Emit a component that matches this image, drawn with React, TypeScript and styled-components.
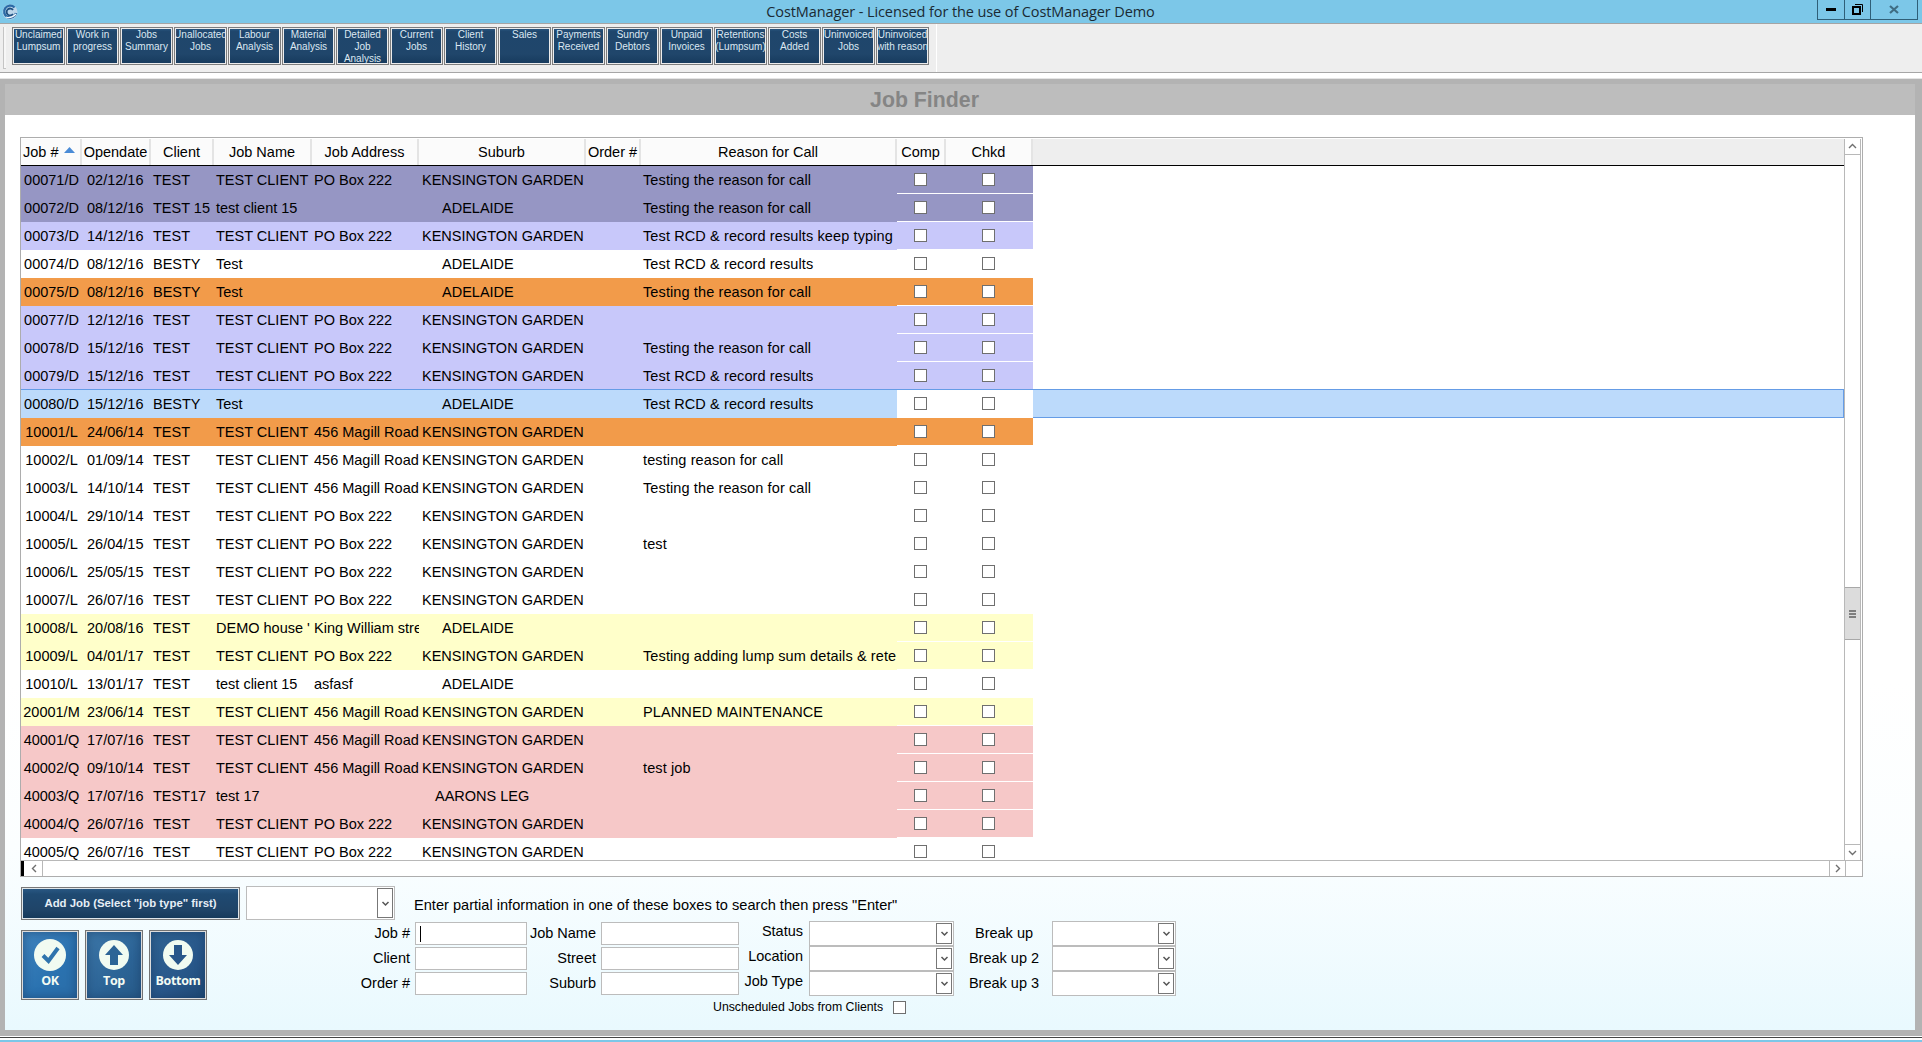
import React from "react";
import styled, { createGlobalStyle } from "styled-components";

const Global = createGlobalStyle`
  html, body { margin: 0; padding: 0; background: #fff; overflow: hidden; }
  * { box-sizing: border-box; }
  #root { width: 1922px; height: 1042px; overflow: hidden; }
`;

const SANS = `"Liberation Sans", Arial, sans-serif`;

const Window = styled.div`
  width: 1922px; height: 1042px; display: flex; flex-direction: column;
  font-family: ${SANS}; color: #000; overflow: hidden;
`;

/* title bar */
const TitleBar = styled.div`
  height: 24px; flex: none; background: #7cc7e8; border-bottom: 1px solid #a4a4a4;
  display: flex; align-items: flex-start; position: relative;
`;
const AppIcon = styled.svg`width: 16px; height: 16px; margin: 4px 0 0 2px; flex: none;`;
const TitleText = styled.div`
  flex: 1; text-align: center; font: 14.5px/23px "Open Sans", sans-serif; color: #1a2a33; padding-left: 86px; letter-spacing: -0.1px;
`;
const WinButtons = styled.div`display: flex; height: 20px; margin-right: 4px; flex: none;`;
const WinButton = styled.div<{ $w: number }>`
  width: ${p => p.$w}px; height: 20px; border: 1px solid #2f5f78; border-top: none; border-left-width: ${p => p.$w === 28 ? 1 : 0}px;
  display: flex; align-items: center; justify-content: center;
`;

/* toolbar */
const ToolbarRow = styled.div`
  height: 49px; flex: none; background: #eeeeee; border-bottom: 1px solid #a6a6a6; display: flex;
`;
const Grip = styled.div`
  width: 3px; height: 42px; margin: 3px 6px 0 3px; flex: none; background: #f6f6f6; border-left: 1px solid #c4c4c4; border-bottom: 1px solid #c4c4c4;
`;
const Tools = styled.div`
  display: flex; gap: 1px; padding-top: 3px; width: 925px; flex: none; border-right: 1px solid #fff;
`;
const NAVY = `linear-gradient(180deg, #2c5a85 0%, #1f466c 10%, #20466b 72%, #163a5c 100%)`;
const ToolButton = styled.div`
  width: 53px; height: 38px; flex: none; border: 1px solid #7d7d7d; box-shadow: inset 0 0 0 1px #ececec;
  background: ${NAVY}; color: #dce8f2; font: 10px/12px ${SANS}; text-align: center; padding-top: 1px; overflow: hidden; white-space: nowrap;
`;
const ToolLine = styled.div`display: block; margin: 0 -3px;`;

const WhiteGap = styled.div`height: 6px; flex: none; background: #fff; border-bottom: 1px solid #e4e4e4;`;

/* main panel */
const Panel = styled.div`
  height: 957px; flex: none; background: #b3b3b3; padding: 5px 7px 6px 5px; display: flex; flex-direction: column;
`;
const PanelHeader = styled.div`
  height: 31px; flex: none; background: #bdbdbd; color: #858585; font: bold 21.3px/33px ${SANS}; text-align: center; padding-right: 71px;
`;
const PanelBody = styled.div`
  flex: 1; min-height: 0; padding: 22px 0 0 15px; background: linear-gradient(180deg, #fff 0%, #fff 62%, #fbfeff 80%, #e9f9fe 100%);
`;

/* grid */
const GridFrame = styled.div`
  width: 1843px; height: 740px; border: 1px solid #adadad; padding-top: 1px; display: flex; flex-direction: column; background: #fff;
`;
const GridTop = styled.div`display: flex; height: 721px; flex: none;`;
const GridMain = styled.div`width: 1823px; flex: none; display: flex; flex-direction: column; overflow: hidden;`;
const HeaderRow = styled.div`
  height: 27px; flex: none; display: flex; background: #eeeeee; border-bottom: 1px solid #000;
`;
const HeaderCell = styled.div<{ $w: number; $left?: boolean }>`
  width: ${p => p.$w}px; flex: none; background: #fbfbfb; border-right: 2px solid #e4e4e4;
  font-size: 14.5px; line-height: 26px; white-space: nowrap; overflow: hidden;
  text-align: ${p => (p.$left ? "left" : "center")}; padding-left: ${p => (p.$left ? 2 : 0)}px;
  display: flex; align-items: center; justify-content: ${p => (p.$left ? "flex-start" : "center")};
`;
const SortArrow = styled.svg`width: 11px; height: 6px; margin: -5px 0 0 6px; flex: none;`;
const GridBody = styled.div`flex: 1; min-height: 0; overflow: hidden;`;

const ROW_COLORS: Record<string, string> = {
  p: "#9696c4", l: "#c8c8fa", w: "#ffffff", o: "#f29b4a", y: "#ffffca", k: "#f6c8c8", s: "#bcdafb",
};
const Row = styled.div<{ $selected: boolean }>`
  height: 28px; display: flex; position: relative; z-index: ${p => (p.$selected ? 1 : 0)};
  box-shadow: ${p => (p.$selected ? "0 -1px 0 #659ce6, inset 0 -1px 0 #659ce6, inset 1px 0 0 #659ce6, inset -1px 0 0 #659ce6" : "none")};
  width: ${p => (p.$selected ? "1823px" : "1012px")};
`;
const Cell = styled.div<{ $w: number; $bg: string; $center?: boolean; $indent?: number }>`
  width: ${p => p.$w}px; flex: none; background: ${p => ROW_COLORS[p.$bg]}; font-size: 14.5px; line-height: 28px;
  white-space: nowrap; overflow: hidden; text-align: ${p => (p.$center ? "center" : "left")};
  padding-left: ${p => (p.$center ? 0 : p.$indent ?? 2)}px;
`;
const OverflowCell = styled(Cell)`overflow: visible;`;
const ReasonCell = styled(Cell)`letter-spacing: 0.11px;`;
const CheckCell = styled.div<{ $w: number; $bg: string }>`
  width: ${p => p.$w}px; flex: none; background: ${p => (p.$bg === "s" ? "#fff" : ROW_COLORS[p.$bg])};
  border-bottom: 1px solid #fff; display: flex; align-items: center; justify-content: center; padding-right: 2px;
`;
const Check = styled.div`
  width: 13px; height: 13px; border: 1px solid #6f6f6f; background: #fff; flex: none;
`;
const RowFill = styled.div`flex: 1; background: #bcdafb; margin: 0 1px 1px 0;`;

/* scrollbars */
const VScroll = styled.div`
  width: 17px; flex: none; border-left: 1px solid #b8b8b8; border-right: 1px solid #b8b8b8; display: flex; flex-direction: column;
`;
const ScrollBtn = styled.div<{ $edge: "top" | "bottom" | "left" | "right" | "none" }>`
  flex: none; display: flex; align-items: center; justify-content: center; background: #fff;
  ${p => (p.$edge === "top" ? "height:16px;border-bottom:1px solid #b8b8b8;" : "")}
  ${p => (p.$edge === "bottom" ? "height:16px;border-top:1px solid #b8b8b8;" : "")}
  ${p => (p.$edge === "left" ? "width:16px;border-right:1px solid #b8b8b8;" : "")}
  ${p => (p.$edge === "right" ? "width:16px;border-left:1px solid #b8b8b8;" : "")}
  ${p => (p.$edge === "none" ? "width:17px;border-left:1px solid #b8b8b8;" : "")}
`;
const VSpacer = styled.div<{ $fixed?: number }>`
  ${p => (p.$fixed ? `height:${p.$fixed}px;flex:none;` : "flex:1;")}
`;
const Thumb = styled.div`
  height: 53px; flex: none; background: #dcdcdc; border-top: 1px solid #a8a8a8; border-bottom: 1px solid #a8a8a8;
  display: flex; flex-direction: column; align-items: center; justify-content: center; gap: 1px;
`;
const ThumbLine = styled.div`width: 7px; height: 2px; background: #7f7f7f;`;
const HScroll = styled.div`
  height: 16px; flex: none; border-top: 1px solid #b8b8b8; display: flex; padding-left: 0;
`;
const HMark = styled.div`width: 3px; height: 15px; background: #000; flex: none; margin-right: 3px;`;
const HTrack = styled.div`flex: 1;`;
const Chev = styled.svg`width: 9px; height: 9px; flex: none;`;

/* bottom */
const Bottom = styled.div`display: flex; flex-direction: column; padding-top: 9px; width: 1843px;`;
const TopLine = styled.div`display: flex; height: 34px; align-items: flex-start; padding-left: 1px;`;
const AddJob = styled.div`
  width: 219px; height: 33px; margin-top: 1px; flex: none; border: 1px solid #777; box-shadow: inset 0 0 0 1px #dfe6ea;
  background: linear-gradient(180deg, #2b5a86 0%, #1f4a72 20%, #1f4468 70%, #15395a 100%);
  color: #e6eef5; font: bold 11.4px/30px ${SANS}; text-align: center;
`;
const DropBox = styled.div<{ $w: number; $h: number }>`
  width: ${p => p.$w}px; height: ${p => p.$h}px; flex: none; border: 1px solid #bcbcbc; background: #fff;
  display: flex; justify-content: flex-end; padding: 1px;
`;
const AddDrop = styled(DropBox)`margin-left: 6px;`;
const DropArrow = styled.div`
  width: 16px; border: 1px solid #777; background: #fff; display: flex; align-items: center; justify-content: center; flex: none;
`;
const Hint = styled.div`margin: 9px 0 0 19px; font-size: 14.6px; line-height: 20px; white-space: nowrap;`;
const MainLine = styled.div`display: flex; margin-top: 1px;`;
const Actions = styled.div`width: 325px; flex: none; display: flex; gap: 6px; padding: 9px 0 0 1px; align-items: flex-start;`;
const BigButton = styled.div<{ $tone: "a" | "b" | "c" }>`
  width: 58px; height: 70px; flex: none; border: 1px solid #737373; box-shadow: inset 0 0 0 1px #dcdcdc, inset 0 0 10px 2px rgba(20,50,90,.45);
  background: ${p => ({
    a: "linear-gradient(135deg, #3f83bd, #2a72b0 60%, #2a6ca6)",
    b: "linear-gradient(135deg, #3d78a9, #2c6496 60%, #275a88)",
    c: "linear-gradient(135deg, #2f6493, #28578a 60%, #1f4a75)",
  }[p.$tone])};
  display: flex; flex-direction: column; align-items: center; padding-top: 8px; color: #f3fbf3;
  font: 700 12.5px/16px "Open Sans", sans-serif; letter-spacing: -0.35px;
`;
const BigIcon = styled.svg`width: 32px; height: 32px; flex: none; margin-bottom: 2px;`;
const SearchGrid = styled.div`
  display: grid; grid-template-columns: 70px 112px 74px 138px 70px 145px 98px 124px; grid-auto-rows: 25px;
`;
const Label = styled.div<{ $up?: boolean; $center?: boolean }>`
  font-size: 14.5px; line-height: 25px; white-space: nowrap; padding-right: ${p => (p.$center ? 0 : p.$up ? 6 : 5)}px;
  text-align: ${p => (p.$center ? "center" : "right")}; padding-left: ${p => (p.$center ? 2 : 0)}px;
  margin-top: ${p => (p.$up ? -2 : 0)}px;
`;
const SearchBox = styled.div`
  height: 23px; margin-top: 1px; border: 1px solid #bcbcbc; background: #fff; display: flex; align-items: center; padding-left: 4px;
`;
const Caret = styled.div`width: 1px; height: 16px; background: #000;`;
const SelectBox = styled(DropBox)`height: 25px;`;
const Unscheduled = styled.div`
  grid-column: 1 / -1; display: flex; align-items: center; padding: 0 0 0 368px; font-size: 12.3px; gap: 10px; white-space: nowrap; height: 22px;
`;
const Footer = styled.div`
  flex: 1; background: #fff; border-top: 1px solid #444; margin-top: 1px; display: flex; flex-direction: column; justify-content: flex-end;
`;
const FooterStrip = styled.div`height: 2px; background: #7cc7e8;`;

const TOOLS = [
  ["Unclaimed", "Lumpsum"], ["Work in", "progress"], ["Jobs", "Summary"], ["Unallocated", "Jobs"], ["Labour", "Analysis"],
  ["Material", "Analysis"], ["Detailed", "Job", "Analysis"], ["Current", "Jobs"], ["Client", "History"], ["Sales"],
  ["Payments", "Received"], ["Sundry", "Debtors"], ["Unpaid", "Invoices"], ["Retentions", "(Lumpsum)"], ["Costs", "Added"],
  ["Uninvoiced", "Jobs"], ["Uninvoiced", "with reason"],
];

const W = [61, 69, 63, 98, 107, 167, 55, 256, 49, 87];
const HEAD = ["Job #", "Opendate", "Client", "Job Name", "Job Address", "Suburb", "Order #", "Reason for Call", "Comp", "Chkd"];

const TC = "TEST CLIENT", PO = "PO Box 222", MG = "456 Magill Road", KG = "KENSINGTON GARDEN", AD = "ADELAIDE";
const TR = "Testing the reason for call", RR = "Test RCD & record results";
type R = [string, string, string, string, string, string, string, string];
const ROWS: R[] = [
  ["00071/D", "02/12/16", "TEST", TC, PO, KG, TR, "p"],
  ["00072/D", "08/12/16", "TEST 15", "test client 15", "", AD, TR, "p"],
  ["00073/D", "14/12/16", "TEST", TC, PO, KG, "Test RCD & record results keep typing", "l"],
  ["00074/D", "08/12/16", "BESTY", "Test", "", AD, RR, "w"],
  ["00075/D", "08/12/16", "BESTY", "Test", "", AD, TR, "o"],
  ["00077/D", "12/12/16", "TEST", TC, PO, KG, "", "l"],
  ["00078/D", "15/12/16", "TEST", TC, PO, KG, TR, "l"],
  ["00079/D", "15/12/16", "TEST", TC, PO, KG, RR, "l"],
  ["00080/D", "15/12/16", "BESTY", "Test", "", AD, RR, "s"],
  ["10001/L", "24/06/14", "TEST", TC, MG, KG, "", "o"],
  ["10002/L", "01/09/14", "TEST", TC, MG, KG, "testing reason for call", "w"],
  ["10003/L", "14/10/14", "TEST", TC, MG, KG, TR, "w"],
  ["10004/L", "29/10/14", "TEST", TC, PO, KG, "", "w"],
  ["10005/L", "26/04/15", "TEST", TC, PO, KG, "test", "w"],
  ["10006/L", "25/05/15", "TEST", TC, PO, KG, "", "w"],
  ["10007/L", "26/07/16", "TEST", TC, PO, KG, "", "w"],
  ["10008/L", "20/08/16", "TEST", "DEMO house '", "King William stre", AD, "", "y"],
  ["10009/L", "04/01/17", "TEST", TC, PO, KG, "Testing adding lump sum details & rete", "y"],
  ["10010/L", "13/01/17", "TEST", "test client 15", "asfasf", AD, "", "w"],
  ["20001/M", "23/06/14", "TEST", TC, MG, KG, "PLANNED MAINTENANCE", "y"],
  ["40001/Q", "17/07/16", "TEST", TC, MG, KG, "", "k"],
  ["40002/Q", "09/10/14", "TEST", TC, MG, KG, "test job", "k"],
  ["40003/Q", "17/07/16", "TEST17", "test 17", "", "AARONS LEG", "", "k"],
  ["40004/Q", "26/07/16", "TEST", TC, PO, KG, "", "k"],
  ["40005/Q", "26/07/16", "TEST", TC, PO, KG, "", "w"],
];

const suburbIndent = (s: string) => (s === AD ? 23 : s === "AARONS LEG" ? 16 : 3);

const Chevron = ({ dir }: { dir: "up" | "down" | "left" | "right" }) => {
  const d = { up: "M1 6 L4.5 2.5 L8 6", down: "M1 3 L4.5 6.5 L8 3", left: "M6 1 L2.5 4.5 L6 8", right: "M3 1 L6.5 4.5 L3 8" }[dir];
  return (
    <Chev viewBox="0 0 9 9">
      <path d={d} fill="none" stroke="#6f6f6f" strokeWidth="1.4" />
    </Chev>
  );
};

const Drop = () => (
  <DropArrow>
    <Chev viewBox="0 0 9 9">
      <path d="M1.5 3 L4.5 6 L7.5 3" fill="none" stroke="#555" strokeWidth="1.5" />
    </Chev>
  </DropArrow>
);

const ROWS_FORM: [string, string, string, string, boolean][] = [
  ["Job #", "Job Name", "Status", "Break up", true],
  ["Client", "Street", "Location", "Break up 2", false],
  ["Order #", "Suburb", "Job Type", "Break up 3", false],
];

export default function App() {
  return (
    <Window>
      <Global />
      <TitleBar>
        <AppIcon viewBox="0 0 16 16">
          <circle cx="8" cy="8" r="7.5" fill="#bcd6ea" />
          <path d="M12.5 3.5 A6 6 0 1 0 14 9" fill="none" stroke="#2b6aa6" strokeWidth="2.4" />
          <path d="M11 6 A3.5 3.5 0 1 0 11 10" fill="none" stroke="#1f4f80" strokeWidth="1.8" />
          <path d="M4 13 Q9 15 14 10" fill="none" stroke="#f2f8fc" strokeWidth="1.2" />
        </AppIcon>
        <TitleText>CostManager - Licensed for the use of CostManager Demo</TitleText>
        <WinButtons>
          <WinButton $w={28}>
            <svg width="10" height="3" viewBox="0 0 10 3"><rect width="10" height="3" y="0" fill="#000" /></svg>
          </WinButton>
          <WinButton $w={26}>
            <svg width="11" height="11" viewBox="0 0 11 11">
              <path d="M3 0.5 H10.5 V8" fill="none" stroke="#000" />
              <rect x="1" y="3" width="7" height="7" fill="none" stroke="#000" strokeWidth="2" />
            </svg>
          </WinButton>
          <WinButton $w={47}>
            <svg width="10" height="9" viewBox="0 0 10 9">
              <path d="M1 1 L9 8 M9 1 L1 8" stroke="#3f6c82" strokeWidth="2.2" />
            </svg>
          </WinButton>
        </WinButtons>
      </TitleBar>

      <ToolbarRow>
        <Grip />
        <Tools>
          {TOOLS.map(t => (
            <ToolButton key={t.join()}>
              {t.map(l => <ToolLine key={l}>{l}</ToolLine>)}
            </ToolButton>
          ))}
        </Tools>
      </ToolbarRow>
      <WhiteGap />

      <Panel>
        <PanelHeader>Job Finder</PanelHeader>
        <PanelBody>
          <GridFrame>
            <GridTop>
              <GridMain>
                <HeaderRow>
                  {HEAD.map((h, i) => (
                    <HeaderCell key={h} $w={W[i]} $left={i === 0}>
                      {h}
                      {i === 0 && (
                        <SortArrow viewBox="0 0 11 6"><path d="M5.5 0 L11 6 H0 Z" fill="#4a8bd6" /></SortArrow>
                      )}
                    </HeaderCell>
                  ))}
                </HeaderRow>
                <GridBody>
                  {ROWS.map(r => {
                    const bg = r[7];
                    return (
                      <Row key={r[0]} $selected={bg === "s"}>
                        <Cell $w={W[0]} $bg={bg} $center>{r[0]}</Cell>
                        <Cell $w={W[1]} $bg={bg} $indent={5}>{r[1]}</Cell>
                        <OverflowCell $w={W[2]} $bg={bg}>{r[2]}</OverflowCell>
                        <Cell $w={W[3]} $bg={bg}>{r[3]}</Cell>
                        <Cell $w={W[4]} $bg={bg}>{r[4]}</Cell>
                        <Cell $w={W[5]} $bg={bg} $indent={suburbIndent(r[5])}>{r[5]}</Cell>
                        <Cell $w={W[6]} $bg={bg}></Cell>
                        <ReasonCell $w={W[7]} $bg={bg}>{r[6]}</ReasonCell>
                        <CheckCell $w={W[8]} $bg={bg}><Check /></CheckCell>
                        <CheckCell $w={W[9]} $bg={bg}><Check /></CheckCell>
                        {bg === "s" && <RowFill />}
                      </Row>
                    );
                  })}
                </GridBody>
              </GridMain>
              <VScroll>
                <ScrollBtn $edge="top"><Chevron dir="up" /></ScrollBtn>
                <VSpacer $fixed={432} />
                <Thumb><ThumbLine /><ThumbLine /><ThumbLine /></Thumb>
                <VSpacer />
                <ScrollBtn $edge="bottom"><Chevron dir="down" /></ScrollBtn>
              </VScroll>
            </GridTop>
            <HScroll>
              <HMark />
              <ScrollBtn $edge="left"><Chevron dir="left" /></ScrollBtn>
              <HTrack />
              <ScrollBtn $edge="right"><Chevron dir="right" /></ScrollBtn>
              <ScrollBtn $edge="none" />
            </HScroll>
          </GridFrame>

          <Bottom>
            <TopLine>
              <AddJob>Add Job (Select "job type" first)</AddJob>
              <AddDrop $w={149} $h={34}><Drop /></AddDrop>
              <Hint>Enter partial information in one of these boxes to search then press "Enter"</Hint>
            </TopLine>
            <MainLine>
              <Actions>
                <BigButton $tone="a">
                  <BigIcon viewBox="0 0 32 32">
                    <circle cx="16" cy="16" r="16" fill="#f1fbf1" />
                    <path d="M9 16.5 L14.5 22 L24 9" fill="none" stroke="#2f74ad" strokeWidth="4" />
                  </BigIcon>
                  OK
                </BigButton>
                <BigButton $tone="b">
                  <BigIcon viewBox="0 0 32 32">
                    <circle cx="16" cy="16" r="15" fill="#f1fbf1" />
                    <path d="M16 6 L25 16 H20 V26 H12 V16 H7 Z" fill="#2c6496" />
                  </BigIcon>
                  Top
                </BigButton>
                <BigButton $tone="c">
                  <BigIcon viewBox="0 0 32 32">
                    <circle cx="16" cy="16" r="15" fill="#f1fbf1" />
                    <path d="M16 26 L25 16 H20 V6 H12 V16 H7 Z" fill="#28578a" />
                  </BigIcon>
                  Bottom
                </BigButton>
              </Actions>
              <SearchGrid>
                {ROWS_FORM.map(([a, b, c, d, caret]) => (
                  <React.Fragment key={a}>
                    <Label>{a}</Label>
                    <SearchBox>{caret && <Caret />}</SearchBox>
                    <Label>{b}</Label>
                    <SearchBox />
                    <Label $up>{c}</Label>
                    <SelectBox $w={145} $h={25}><Drop /></SelectBox>
                    <Label $center>{d}</Label>
                    <SelectBox $w={124} $h={25}><Drop /></SelectBox>
                  </React.Fragment>
                ))}
                <Unscheduled>
                  Unscheduled Jobs from Clients
                  <Check />
                </Unscheduled>
              </SearchGrid>
            </MainLine>
          </Bottom>
        </PanelBody>
      </Panel>
      <Footer><FooterStrip /></Footer>
    </Window>
  );
}
